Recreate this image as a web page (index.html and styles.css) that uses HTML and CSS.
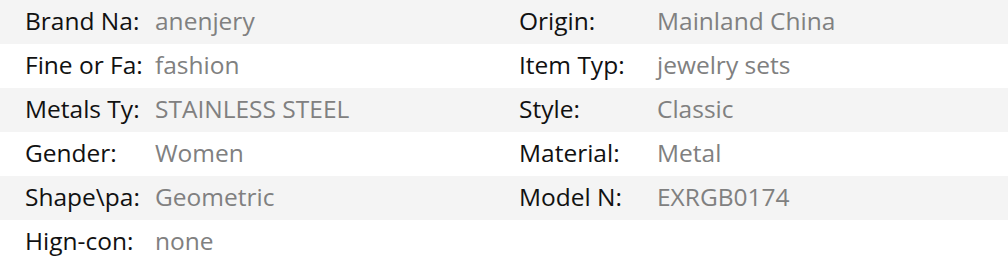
FILE: index.html
```html
<!DOCTYPE html>
<html>
    <head>
        <title>Item specifics</title>
        <link rel="stylesheet" href="styles.css">
    </head>
    <body>
        <div class="specs">
            <div class="row">
                <span class="label">Brand Na:</span><span class="value">anenjery</span>
                <span class="label">Origin:</span><span class="value">Mainland China</span>
            </div>
            <div class="row">
                <span class="label">Fine or Fa:</span><span class="value">fashion</span>
                <span class="label">Item Typ:</span><span class="value">jewelry sets</span>
            </div>
            <div class="row">
                <span class="label">Metals Ty:</span><span class="value">STAINLESS STEEL</span>
                <span class="label">Style:</span><span class="value">Classic</span>
            </div>
            <div class="row">
                <span class="label">Gender:</span><span class="value">Women</span>
                <span class="label">Material:</span><span class="value">Metal</span>
            </div>
            <div class="row">
                <span class="label">Shape\pa:</span><span class="value">Geometric</span>
                <span class="label">Model N:</span><span class="value">EXRGB0174</span>
            </div>
            <div class="row">
                <span class="label">Hign-con:</span><span class="value">none</span>
            </div>
        </div>
    </body>
</html>
```

FILE: styles.css
```css
body{
    margin: 0;
    background-color: #fff;
    font-family: "Open Sans", "Noto Sans", sans-serif;
    font-size: 24.5px;
}
.row{
    box-sizing: border-box;
    display: grid;
    grid-template-columns: 130px 364px 138px 1fr;
    align-items: center;
    height: 44px;
    padding: 0 0 4px 25px;
}
.row:nth-child(odd){
    background-color: #f4f4f4;
}
.label{
    color: #111;
    white-space: nowrap;
}
.value{
    color: #808080;
    white-space: nowrap;
}
```
